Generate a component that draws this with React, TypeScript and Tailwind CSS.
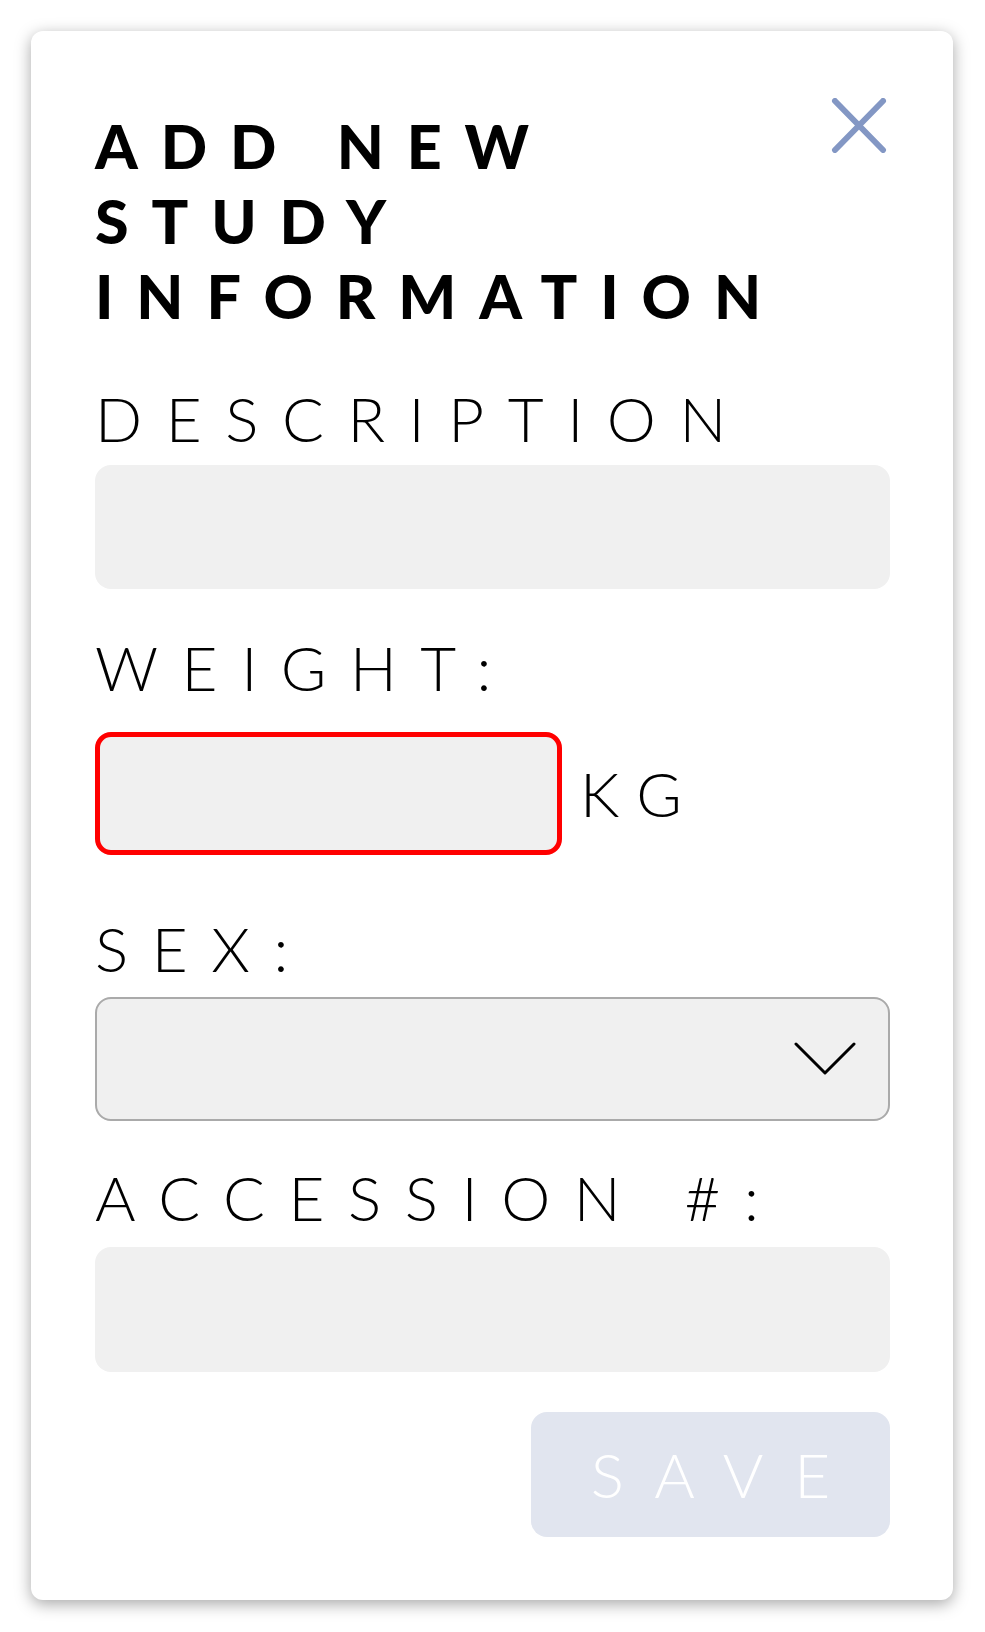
import React from "react";

const labelCls =
  "font-light text-[62px] leading-[75px] tracking-[0.38em] text-black whitespace-nowrap";

export default function App() {
  return (
    <div className="min-h-screen w-full bg-white pt-[31px] pl-[31px] font-['Lato',sans-serif]">
      <div className="w-[922px] h-[1569px] rounded-[12px] bg-white shadow-[0_4px_16px_rgba(0,0,0,0.35)] pt-[67px] pl-[64px] pr-[63px] flex flex-col">
        <div className="flex justify-between items-start">
          <h1 className="mt-[10px] font-black text-[61px] leading-[75px] tracking-[0.375em] text-black">
            <div>ADD NEW</div>
            <div>STUDY</div>
            <div>INFORMATION</div>
          </h1>
          <button className="mr-[3px] w-[56px] h-[55px] flex items-center justify-center">
            <svg width="56" height="55" viewBox="0 0 56 55" fill="none">
              <path
                d="M4 3 L52 52 M52 3 L4 52"
                stroke="#8397c4"
                strokeWidth="6"
                strokeLinecap="round"
              />
            </svg>
          </button>
        </div>

        <div className={`mt-[48px] ${labelCls}`}>DESCRIPTION</div>
        <div className="mt-[9px] h-[124px] w-full rounded-[16px] bg-[#f0f0f0]" />

        <div className={`mt-[41px] ${labelCls}`}>WEIGHT:</div>
        <div className="mt-[27px] flex items-center">
          <div className="h-[123px] w-[467px] rounded-[16px] border-[5px] border-[#ff0000] bg-[#f0f0f0]" />
          <span className="ml-[18px] font-light text-[62px] leading-[75px] tracking-[0.32em] text-black">
            KG
          </span>
        </div>

        <div className={`mt-[56px] ${labelCls}`}>SEX:</div>
        <div className="mt-[11px] h-[124px] w-full rounded-[16px] border-2 border-[#aaaaaa] bg-[#f0f0f0] flex items-center justify-end pr-[32px]">
          <svg width="62" height="34" viewBox="0 0 62 34" fill="none">
            <path
              d="M2 2 L31 31 L60 2"
              stroke="#000"
              strokeWidth="3"
              strokeLinecap="round"
              strokeLinejoin="round"
            />
          </svg>
        </div>

        <div className={`mt-[39px] ${labelCls}`}>ACCESSION #:</div>
        <div className="mt-[12px] h-[125px] w-full rounded-[16px] bg-[#f0f0f0]" />

        <div className="mt-[40px] flex justify-end">
          <button className="h-[125px] w-[359px] rounded-[16px] bg-[#e1e5ef] text-white font-light text-[62px] leading-[75px] tracking-[0.5em] pl-[0.5em] flex items-center justify-center">
            SAVE
          </button>
        </div>
      </div>
    </div>
  );
}
